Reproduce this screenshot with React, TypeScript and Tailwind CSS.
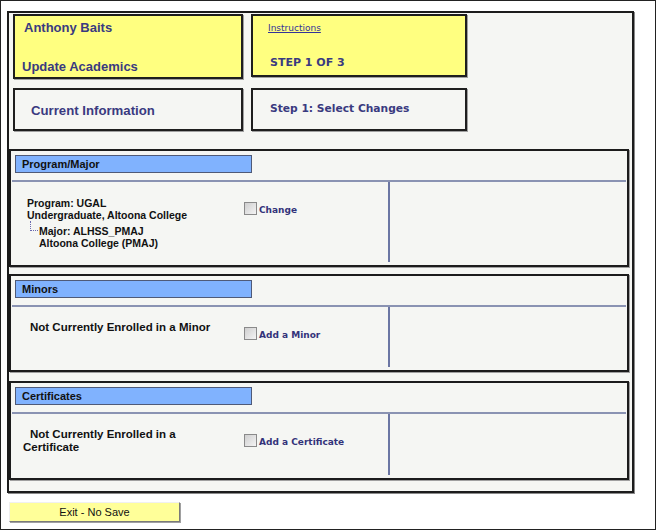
import React from "react";

const arial = { fontFamily: '"Liberation Sans", Arial, sans-serif' };
const dejavu = { fontFamily: '"DejaVu Sans", Verdana, sans-serif' };

function Checkbox() {
  return (
    <span className="inline-block w-[13px] h-[13px] border border-[#8a8a8a] bg-gradient-to-br from-[#cfcfcf] to-[#f4f4f4] shrink-0" />
  );
}

function Section({
  title,
  height,
  left,
  label,
}: {
  title: string;
  height: string;
  left: React.ReactNode;
  label: string;
}) {
  return (
    <div className={`border-2 border-[#1c1c1c] shadow-[1px_1px_0_#a0a0a0] bg-[#f5f6f3] flex flex-col ${height}`}>
      <div className="ml-[4px] mt-[4px] w-[237px] h-[18px] border border-[#4f5a78] bg-[#80b2fe] flex items-center pl-[6px]">
        <span className="text-[11px] font-bold text-[#111] leading-none" style={arial}>
          {title}
        </span>
      </div>
      <div className="mx-[1px] mt-[7px] h-[2px] bg-[#8a93b2]" />
      <div className="flex flex-1 pb-[3px]">
        <div className="w-[233px] pt-[14px]">{left}</div>
        <div className="w-[144px] pt-[20px]">
          <div className="flex items-start gap-[2px]">
            <Checkbox />
            <span className="text-[9px] font-bold text-[#33337a] mt-[4px] leading-none" style={dejavu}>
              {label}
            </span>
          </div>
        </div>
        <div className="w-[2px] bg-[#6b76a3]" />
        <div className="flex-1" />
      </div>
    </div>
  );
}

export default function App() {
  return (
    <div className="w-[656px] h-[530px] border border-[#222] bg-white overflow-hidden">
      <div className="ml-[6px] mt-[10px] w-[627px] h-[482px] border-2 border-[#1c1c1c] shadow-[1px_1px_0_#8a8a8a] bg-[#f5f6f3] pt-[1px] pl-[4px]">
        <div className="flex gap-[8px]">
          <div className="w-[230px] h-[65px] border-2 border-[#1e1e1e] shadow-[1px_1px_0_#a0a0a0] bg-[#ffff80] flex flex-col justify-between pl-[9px] pr-2 pt-[4px] pb-[2px]">
            <span className="text-[13px] font-bold text-[#3a3a80] leading-[16px]" style={arial}>
              Anthony Baits
            </span>
            <span className="text-[13px] font-bold text-[#3a3a80] leading-[16px] -ml-[2px]" style={arial}>
              Update Academics
            </span>
          </div>
          <div className="w-[216px] h-[63px] border-2 border-[#1e1e1e] shadow-[1px_1px_0_#a0a0a0] bg-[#ffff80] flex flex-col pl-[15px] pt-[6px]">
            <span className="text-[9px] text-[#333399] underline leading-[12px]" style={dejavu}>
              Instructions
            </span>
            <span className="mt-[22px] ml-[2px] text-[11px] font-bold text-[#3a3a80] leading-[14px]" style={dejavu}>
              STEP 1 OF 3
            </span>
          </div>
        </div>
        <div className="flex gap-[8px] mt-[9px]">
          <div className="w-[230px] h-[43px] border-2 border-[#1e1e1e] shadow-[1px_1px_0_#a0a0a0] flex items-center pl-[16px] pt-[3px]">
            <span className="text-[13.2px] font-bold text-[#3a3a80]" style={arial}>
              Current Information
            </span>
          </div>
          <div className="w-[216px] h-[43px] border-2 border-[#1e1e1e] shadow-[1px_1px_0_#a0a0a0] flex items-center pl-[17px] pb-[1px]">
            <span className="text-[10.7px] font-bold text-[#3a3a80]" style={dejavu}>
              Step 1: Select Changes
            </span>
          </div>
        </div>

        <div className="-ml-[4px] w-[620px] mt-[18px] flex flex-col">
          <Section
            title="Program/Major"
            height="h-[118px]"
            label="Change"
            left={
              <div className="pl-[16px] pt-[1px] text-[10.5px] font-bold text-[#111] leading-[12px]" style={arial}>
                <div>Program: UGAL</div>
                <div>Undergraduate, Altoona College</div>
                <div className="flex">
                  <div className="ml-[3px] w-[8px] h-[10px] border-l border-b border-dotted border-[#6a6ab0]" />
                  <div className="ml-[1px] mt-[4px]">
                    <div>Major: ALHSS_PMAJ</div>
                    <div>Altoona College (PMAJ)</div>
                  </div>
                </div>
              </div>
            }
          />
          <div className="mt-[7px]">
            <Section
              title="Minors"
              height="h-[98px]"
              label="Add a Minor"
              left={
                <div className="pl-[19px] text-[11.5px] font-bold text-[#111] leading-[13px]" style={arial}>
                  Not Currently Enrolled in a Minor
                </div>
              }
            />
          </div>
          <div className="mt-[9px]">
            <Section
              title="Certificates"
              height="h-[99px]"
              label="Add a Certificate"
              left={
                <div className="pl-[12px] text-[11.5px] font-bold text-[#111] leading-[13px]" style={arial}>
                  <div className="pl-[7px]">Not Currently Enrolled in a</div>
                  <div>Certificate</div>
                </div>
              }
            />
          </div>
        </div>
      </div>
      <div className="ml-[8px] mt-[9px] w-[171px] h-[20px] bg-[#ffff99] border border-t-[#f0f0f0] border-l-[#f0f0f0] border-r-[#7a7a7a] border-b-[#7a7a7a] shadow-[1px_1px_0_#a0a0a0] flex items-center justify-center">
        <span className="text-[11px] text-[#111]" style={arial}>
          Exit - No Save
        </span>
      </div>
    </div>
  );
}
